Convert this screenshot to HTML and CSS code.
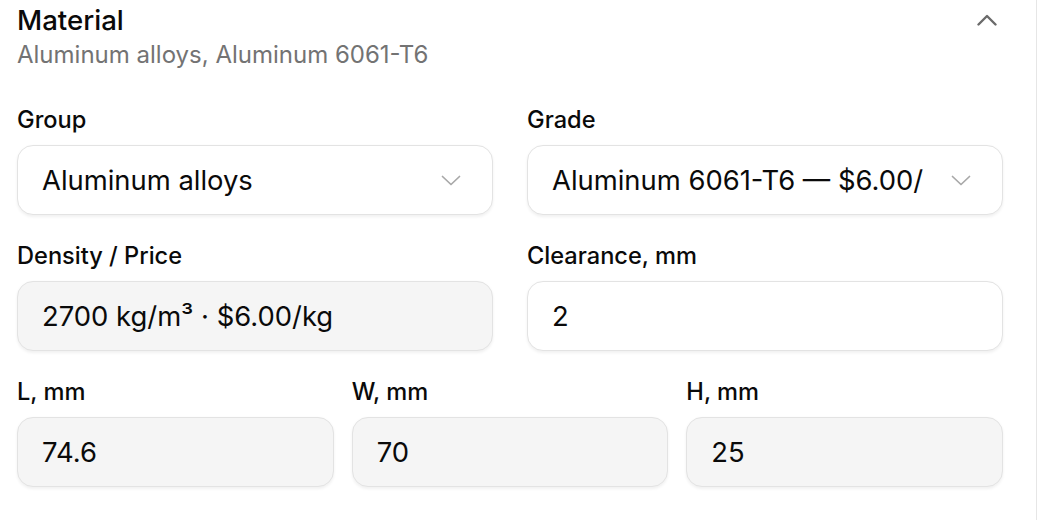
FILE: index.html
```html
<!DOCTYPE html>
<html lang="en">
<head>
<meta charset="utf-8">
<title>Material</title>
<link rel="stylesheet" href="styles.css">
</head>
<body>
<div class="panel">
  <div class="header">
    <div class="heading">
      <h2 class="title">Material</h2>
      <p class="subtitle">Aluminum alloys, Aluminum 6061-T6</p>
    </div>
    <svg class="collapse" width="20" height="12" viewBox="0 0 20 12" aria-hidden="true">
      <path d="M1.5 10.5 L10 2 L18.5 10.5" fill="none" stroke="#6b6b6b" stroke-width="2.4" stroke-linecap="round" stroke-linejoin="round"/>
    </svg>
  </div>

  <div class="grid grid-2">
    <div class="field">
      <label class="label">Group</label>
      <div class="box select">
        <span class="value">Aluminum alloys</span>
        <svg class="chev" width="20" height="11" viewBox="0 0 20 11" aria-hidden="true">
          <path d="M1.5 1.5 L10 9.5 L18.5 1.5" fill="none" stroke="#a8a8a8" stroke-width="1.7" stroke-linecap="round" stroke-linejoin="round"/>
        </svg>
      </div>
    </div>
    <div class="field">
      <label class="label">Grade</label>
      <div class="box select">
        <span class="value" title="Aluminum 6061-T6 — $6.00/kg">Aluminum 6061-T6 — $6.00/kg</span>
        <svg class="chev" width="20" height="11" viewBox="0 0 20 11" aria-hidden="true">
          <path d="M1.5 1.5 L10 9.5 L18.5 1.5" fill="none" stroke="#a8a8a8" stroke-width="1.7" stroke-linecap="round" stroke-linejoin="round"/>
        </svg>
      </div>
    </div>

    <div class="field">
      <label class="label">Density / Price</label>
      <div class="box readonly"><span class="value">2700 kg/m³ · $6.00/kg</span></div>
    </div>
    <div class="field">
      <label class="label">Clearance, mm</label>
      <div class="box"><span class="value">2</span></div>
    </div>
  </div>

  <div class="grid grid-3">
    <div class="field">
      <label class="label">L, mm</label>
      <div class="box readonly"><span class="value">74.6</span></div>
    </div>
    <div class="field">
      <label class="label">W, mm</label>
      <div class="box readonly"><span class="value">70</span></div>
    </div>
    <div class="field">
      <label class="label">H, mm</label>
      <div class="box readonly"><span class="value">25</span></div>
    </div>
  </div>
</div>
</body>
</html>
```

FILE: styles.css
```css
* { box-sizing: border-box; }

html, body {
  margin: 0;
  padding: 0;
  background: #ffffff;
}

body {
  font-family: Inter, "Noto Sans", "Liberation Sans", sans-serif;
  color: #0a0a0a;
}

.panel {
  width: 1037px;
  height: 520px;
  border-right: 1px solid #e6e6e6;
  padding: 1px 33px 0 17px;
}

.header {
  display: flex;
  justify-content: space-between;
  align-items: flex-start;
  margin-bottom: 33px;
}

.title {
  margin: 0;
  font-size: 27.6px;
  line-height: 38px;
  font-weight: 500;
}

.subtitle {
  margin: 0;
  font-size: 24px;
  line-height: 32px;
  color: #737373;
}

.collapse {
  margin-top: 13px;
  margin-right: 6px;
}

.grid {
  display: grid;
  row-gap: 25px;
}

.grid-2 {
  grid-template-columns: minmax(0, 1fr) minmax(0, 1fr);
  column-gap: 34px;
  margin-bottom: 25px;
}

.grid-3 {
  grid-template-columns: minmax(0, 1fr) minmax(0, 1fr) minmax(0, 1fr);
  column-gap: 18px;
}

.field {
  min-width: 0;
}

.label {
  display: block;
  font-size: 23.6px;
  line-height: 32px;
  font-weight: 500;
  margin-bottom: 9px;
}

.box {
  height: 70px;
  display: flex;
  align-items: center;
  padding: 0 24px;
  border: 1px solid #e3e3e3;
  border-radius: 16px;
  background: #ffffff;
  box-shadow: 0 1.6px 3px rgba(0, 0, 0, 0.06);
  font-size: 27.4px;
}

.box.readonly {
  background: #f5f5f5;
}

.box.select {
  padding-right: 31px;
  gap: 27px;
}

.value {
  flex: 1;
  min-width: 0;
  white-space: nowrap;
  overflow: hidden;
}

.chev {
  flex: none;
}
```
